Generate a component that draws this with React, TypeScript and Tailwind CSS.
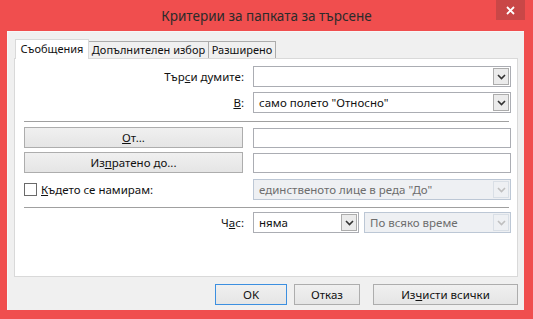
import React from 'react';

const font = { fontFamily: '"Noto Sans", "Open Sans", sans-serif' };

function Chevron({ disabled }: { disabled?: boolean }) {
  return (
    <svg width="9" height="6" viewBox="0 0 9 6">
      <path
        d="M1 1 L4.5 4.5 L8 1"
        fill="none"
        stroke={disabled ? '#bfbfbf' : '#333333'}
        strokeWidth="1.6"
      />
    </svg>
  );
}

function Combo({ value, width, disabled }: { value?: string; width: string; disabled?: boolean }) {
  return (
    <div
      className={`flex h-[21px] items-center ${width} border ${
        disabled ? 'border-[#bcc7d5] bg-[#eef0f3] text-[#6d6d6d]' : 'border-[#abadb3] bg-white text-[#111]'
      }`}
    >
      <span className="flex-1 overflow-hidden whitespace-nowrap pl-[5px] leading-[15px]">{value}</span>
      <div
        className={`mr-[1px] flex h-[17px] w-[16px] items-center justify-center border ${
          disabled ? 'border-[#d9dfe6] bg-[#eef0f3]' : 'border-[#acacac] bg-[#ebebeb]'
        }`}
      >
        <Chevron disabled={disabled} />
      </div>
    </div>
  );
}

function Btn({ children, className }: { children: React.ReactNode; className: string }) {
  return (
    <div
      className={`flex items-center justify-center whitespace-nowrap border bg-gradient-to-b from-[#f0f0f0] to-[#e5e5e5] text-[#111] ${className}`}
    >
      {children}
    </div>
  );
}

export default function App() {
  return (
    <div className="h-[319px] w-[533px] overflow-hidden bg-[#f04e4e] text-[11.5px]" style={font}>
      {/* Title bar */}
      <div className="relative flex h-[31px] items-center justify-center">
        <span className="mt-[1px] whitespace-nowrap text-[13.5px] text-[#2b2b2b]">Критерии за папката за търсене</span>
        <div className="absolute right-[8px] top-0 flex h-[20px] w-[29px] items-center justify-center bg-[#c94747]">
          <svg width="9" height="9" viewBox="0 0 9 9">
            <path d="M1 1 L8 8 M8 1 L1 8" stroke="#ffffff" strokeWidth="1.8" />
          </svg>
        </div>
      </div>

      {/* Client area */}
      <div className="ml-[7px] h-[279px] w-[517px] border-l border-t border-[#f7f7f7] bg-[#f0f0f0]">
        {/* Tabs */}
        <div className="ml-[6px] mt-[6px] flex h-[20px] items-end whitespace-nowrap pl-[1px] text-[11px]">
          <div className="relative z-10 -mb-[1px] flex h-[20px] w-[74px] items-center justify-center border border-b-0 border-[#d9d9d9] bg-white text-[#111]">
            Съобщения
          </div>
          <div className="flex h-[17px] w-[120px] items-center justify-center border border-b-0 border-l-0 border-[#acacac] bg-[#f0f0f0] text-[#111]">
            Допълнителен избор
          </div>
          <div className="flex h-[17px] w-[67px] items-center justify-center border border-b-0 border-l-0 border-[#acacac] bg-[#f0f0f0] text-[#111]">
            Разширено
          </div>
        </div>

        {/* Panel */}
        <div className="ml-[6px] h-[219px] w-[504px] whitespace-nowrap border border-[#d9d9d9] bg-white pl-[9px] pr-[5px]">
          <div className="mt-[7px] flex items-center">
            <div className="w-[229px] pr-[9px] text-right text-[#111]">
              Тър<span className="underline">с</span>и думите:
            </div>
            <Combo width="w-[258px]" />
          </div>
          <div className="mt-[5px] flex items-center">
            <div className="w-[229px] pr-[9px] text-right text-[#111]">
              <span className="underline">В</span>:
            </div>
            <Combo width="w-[258px]" value={'само полето "Относно"'} />
          </div>
          <div className="mr-[3px] mt-[8px] h-[2px] border-t border-b border-t-[#a0a0a0] border-b-white" />

          <div className="mt-[4px] flex items-center">
            <Btn className="h-[21px] w-[219px] border-[#adadad]">
              <span className="underline">О</span>т...
            </Btn>
            <div className="ml-[10px] h-[20px] w-[258px] border border-[#abadb3] bg-white" />
          </div>
          <div className="mt-[4px] flex items-center">
            <Btn className="h-[21px] w-[219px] border-[#adadad]">
              Из<span className="underline">п</span>ратено до...
            </Btn>
            <div className="ml-[10px] h-[20px] w-[258px] border border-[#abadb3] bg-white" />
          </div>
          <div className="mt-[6px] flex items-center">
            <div className="flex w-[229px] items-center">
              <div className="h-[13px] w-[13px] border border-[#6a6a6a] bg-white" />
              <span className="ml-[4px] text-[#111]">
                <span className="underline">К</span>ъдето се намирам:
              </span>
            </div>
            <Combo width="w-[258px]" disabled value={'единственото лице в реда "До"'} />
          </div>
          <div className="mr-[3px] mt-[7px] h-[2px] border-t border-b border-t-[#a0a0a0] border-b-white" />

          <div className="mt-[3px] flex items-center">
            <div className="w-[229px] pr-[9px] text-right text-[#111]">
              Ч<span className="underline">а</span>с:
            </div>
            <Combo width="w-[106px]" value="няма" />
            <div className="ml-[5px]">
              <Combo width="w-[147px]" disabled value="По всяко време" />
            </div>
          </div>
        </div>

        {/* Buttons */}
        <div className="mt-[7px] flex justify-end pr-[6px]">
          <Btn className="h-[21px] w-[72px] border-[#3c8fe0]">OK</Btn>
          <Btn className="ml-[7px] h-[21px] w-[66px] border-[#adadad]">Отказ</Btn>
          <Btn className="ml-[13px] h-[21px] w-[145px] border-[#adadad]">
            Из<span className="underline">ч</span>исти всички
          </Btn>
        </div>
      </div>
    </div>
  );
}
